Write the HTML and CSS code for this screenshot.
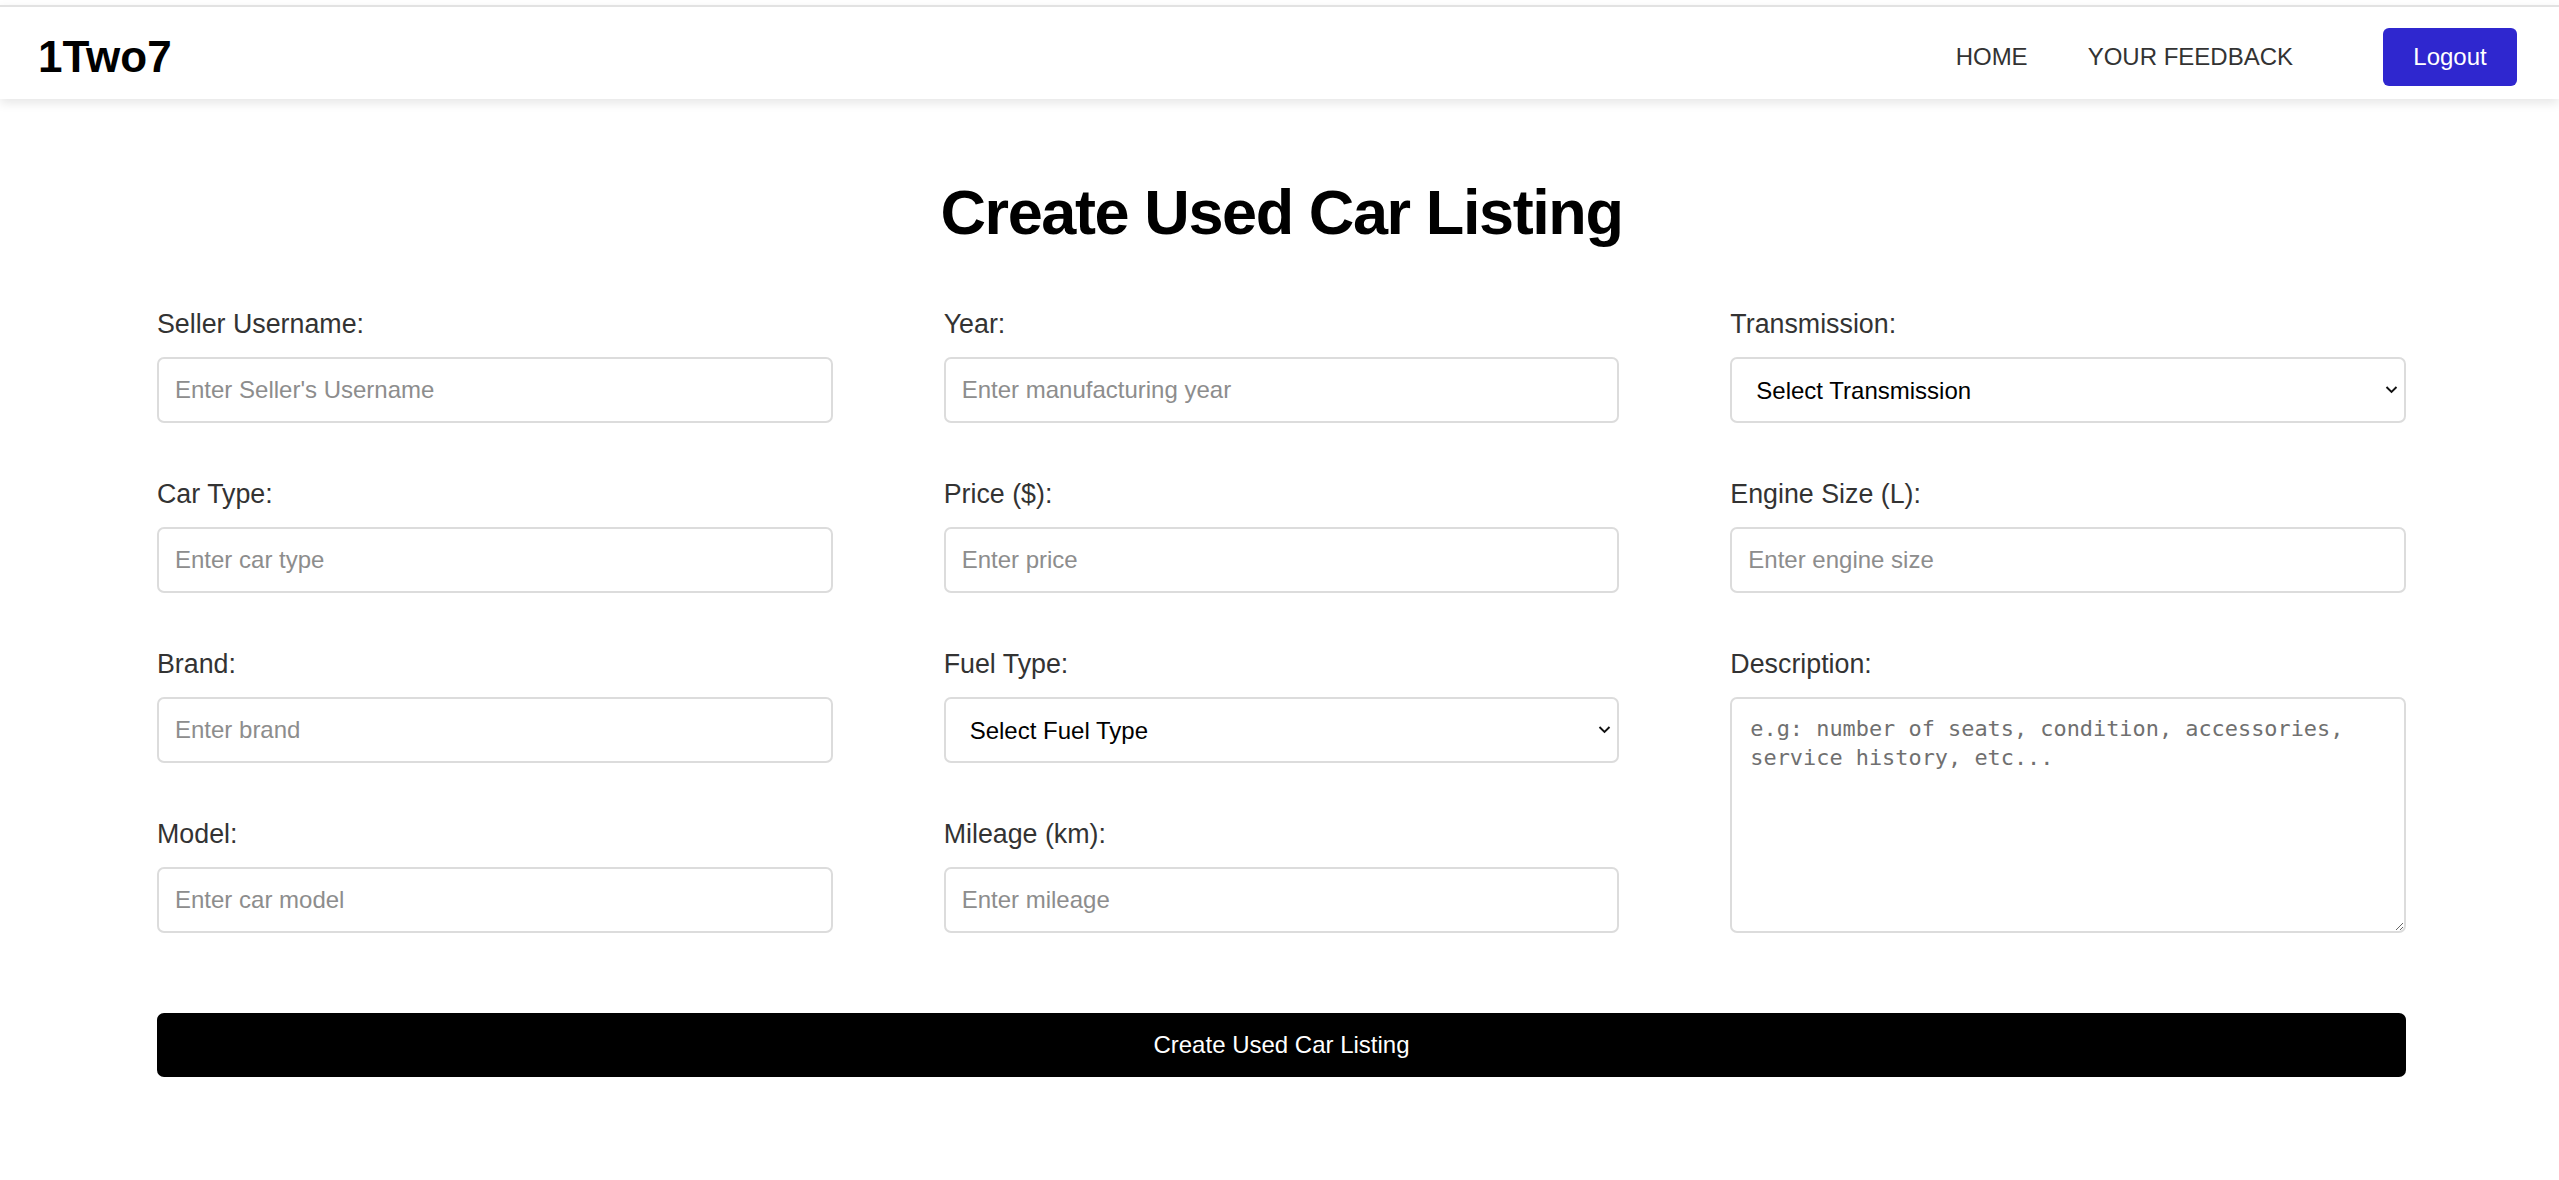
FILE: index.html
```html
<!DOCTYPE html>
<html lang="en">
<head>
<meta charset="utf-8">
<title>Create Used Car Listing</title>
<link rel="stylesheet" href="styles.css">
</head>
<body>
<header class="navbar">
  <div class="logo">1Two7</div>
  <nav class="nav-links">
    <a class="nav-link" href="#">HOME</a>
    <a class="nav-link nav-link-last" href="#">YOUR FEEDBACK</a>
    <button class="logout-btn" type="button">Logout</button>
  </nav>
</header>
<main class="page">
  <h1 class="page-title">Create Used Car Listing</h1>
  <form class="listing-form">
    <div class="form-grid">
      <div class="form-column">
        <div class="field">
          <label class="field-label">Seller Username:</label>
          <input class="text-input" type="text" placeholder="Enter Seller's Username">
        </div>
        <div class="field">
          <label class="field-label">Car Type:</label>
          <input class="text-input" type="text" placeholder="Enter car type">
        </div>
        <div class="field">
          <label class="field-label">Brand:</label>
          <input class="text-input" type="text" placeholder="Enter brand">
        </div>
        <div class="field">
          <label class="field-label">Model:</label>
          <input class="text-input" type="text" placeholder="Enter car model">
        </div>
      </div>
      <div class="form-column">
        <div class="field">
          <label class="field-label">Year:</label>
          <input class="text-input" type="text" placeholder="Enter manufacturing year">
        </div>
        <div class="field">
          <label class="field-label">Price ($):</label>
          <input class="text-input" type="text" placeholder="Enter price">
        </div>
        <div class="field">
          <label class="field-label">Fuel Type:</label>
          <div class="select-wrap">
            <select class="select-input">
              <option>Select Fuel Type</option>
            </select>
            <svg class="select-arrow" width="13" height="9" viewBox="0 0 13 9"><path d="M1.5 2 L6.5 7 L11.5 2" fill="none" stroke="#111" stroke-width="1.9"/></svg>
          </div>
        </div>
        <div class="field">
          <label class="field-label">Mileage (km):</label>
          <input class="text-input" type="text" placeholder="Enter mileage">
        </div>
      </div>
      <div class="form-column">
        <div class="field">
          <label class="field-label">Transmission:</label>
          <div class="select-wrap">
            <select class="select-input">
              <option>Select Transmission</option>
            </select>
            <svg class="select-arrow" width="13" height="9" viewBox="0 0 13 9"><path d="M1.5 2 L6.5 7 L11.5 2" fill="none" stroke="#111" stroke-width="1.9"/></svg>
          </div>
        </div>
        <div class="field">
          <label class="field-label">Engine Size (L):</label>
          <input class="text-input" type="text" placeholder="Enter engine size">
        </div>
        <div class="field">
          <label class="field-label">Description:</label>
          <textarea class="textarea-input" placeholder="e.g: number of seats, condition, accessories, service history, etc..."></textarea>
        </div>
      </div>
    </div>
    <button class="submit-btn" type="button">Create Used Car Listing</button>
  </form>
</main>
</body>
</html>
```
FILE: styles.css
```css
body {
  margin: 0;
  background: #ffffff;
  font-family: "Liberation Sans", Arial, sans-serif;
  color: #000;
}

.navbar {
  margin-top: 5px;
  border-top: 2px solid #e2e2e2;
  height: 84px;
  padding: 8px 42px 0 38px;
  display: flex;
  align-items: center;
  justify-content: space-between;
  background: #fff;
  box-shadow: 0 4px 10px rgba(0, 0, 0, 0.1);
}

.logo {
  font-size: 44px;
  font-weight: bold;
  color: #000;
}

.nav-links {
  display: flex;
  align-items: center;
}

.nav-link {
  font-size: 24px;
  color: #333;
  text-decoration: none;
  margin-right: 60px;
}

.nav-link-last {
  margin-right: 90px;
}

.logout-btn {
  width: 134px;
  height: 58px;
  padding: 0;
  border: none;
  border-radius: 6px;
  background: #2f27cf;
  color: #fff;
  font-family: inherit;
  font-size: 24px;
}

.page {
  padding: 79px 153px 0 157px;
}

.page-title {
  margin: 0 0 62px;
  text-align: center;
  font-size: 63px;
  line-height: 69px;
  letter-spacing: -1.4px;
  font-weight: bold;
  color: #000;
}

.form-grid {
  display: grid;
  grid-template-columns: repeat(3, 1fr);
  column-gap: 111px;
}

.form-column {
  display: flex;
  flex-direction: column;
}

.field {
  display: flex;
  flex-direction: column;
  margin-bottom: 56px;
}

.field:last-child {
  margin-bottom: 0;
}

.field-label {
  font-size: 26.8px;
  line-height: 30px;
  color: #333;
  margin-bottom: 18px;
}

.text-input,
.select-input {
  box-sizing: border-box;
  width: 100%;
  height: 66px;
  border: 2px solid #dcdcdc;
  border-radius: 7px;
  padding: 0 16px;
  font-family: "Liberation Sans", Arial, sans-serif;
  font-size: 24px;
  color: #000;
  background: #fff;
  outline: none;
}

.text-input::placeholder {
  color: #8d8d8d;
}

.select-wrap {
  position: relative;
}

.select-input {
  appearance: none;
  -webkit-appearance: none;
  padding-left: 24px;
}

.select-arrow {
  position: absolute;
  right: 8px;
  top: 28px;
  pointer-events: none;
}

.textarea-input {
  box-sizing: border-box;
  width: 100%;
  height: 236px;
  border: 2px solid #dcdcdc;
  border-radius: 7px;
  padding: 15px 18px;
  font-family: "DejaVu Sans Mono", "Liberation Mono", monospace;
  font-size: 21.9px;
  line-height: 29px;
  color: #000;
  outline: none;
}

.textarea-input::placeholder {
  color: #707070;
}

.submit-btn {
  display: block;
  width: 100%;
  height: 64px;
  margin-top: 80px;
  border: none;
  border-radius: 7px;
  background: #000;
  color: #fff;
  font-family: inherit;
  font-size: 24px;
}
```
